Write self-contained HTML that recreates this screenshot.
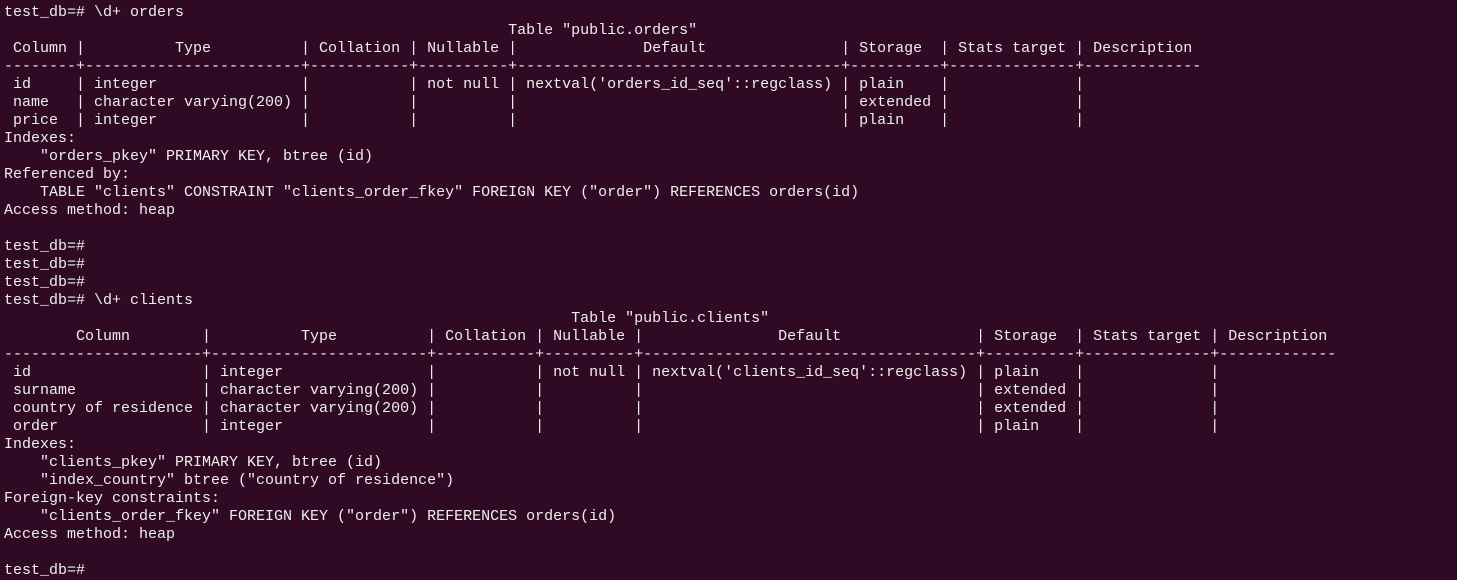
<!DOCTYPE html>
<html><head><meta charset="utf-8"><style>
html,body{margin:0;padding:0;background:#300a24;width:1457px;height:564px;overflow:hidden;}
pre{position:absolute;left:4px;top:-14px;margin:0;font-family:"Liberation Mono",monospace;font-size:15px;line-height:18px;color:#eeeeec;white-space:pre;}
</style></head><body>
<pre>test_db=#
test_db=# \d+ orders
                                                        Table "public.orders"
 Column |          Type          | Collation | Nullable |              Default               | Storage  | Stats target | Description 
--------+------------------------+-----------+----------+------------------------------------+----------+--------------+-------------
 id     | integer                |           | not null | nextval('orders_id_seq'::regclass) | plain    |              | 
 name   | character varying(200) |           |          |                                    | extended |              | 
 price  | integer                |           |          |                                    | plain    |              | 
Indexes:
    "orders_pkey" PRIMARY KEY, btree (id)
Referenced by:
    TABLE "clients" CONSTRAINT "clients_order_fkey" FOREIGN KEY ("order") REFERENCES orders(id)
Access method: heap

test_db=#
test_db=#
test_db=#
test_db=# \d+ clients
                                                               Table "public.clients"
        Column        |          Type          | Collation | Nullable |               Default               | Storage  | Stats target | Description 
----------------------+------------------------+-----------+----------+-------------------------------------+----------+--------------+-------------
 id                   | integer                |           | not null | nextval('clients_id_seq'::regclass) | plain    |              | 
 surname              | character varying(200) |           |          |                                     | extended |              | 
 country of residence | character varying(200) |           |          |                                     | extended |              | 
 order                | integer                |           |          |                                     | plain    |              | 
Indexes:
    "clients_pkey" PRIMARY KEY, btree (id)
    "index_country" btree ("country of residence")
Foreign-key constraints:
    "clients_order_fkey" FOREIGN KEY ("order") REFERENCES orders(id)
Access method: heap

test_db=#</pre>
</body></html>
